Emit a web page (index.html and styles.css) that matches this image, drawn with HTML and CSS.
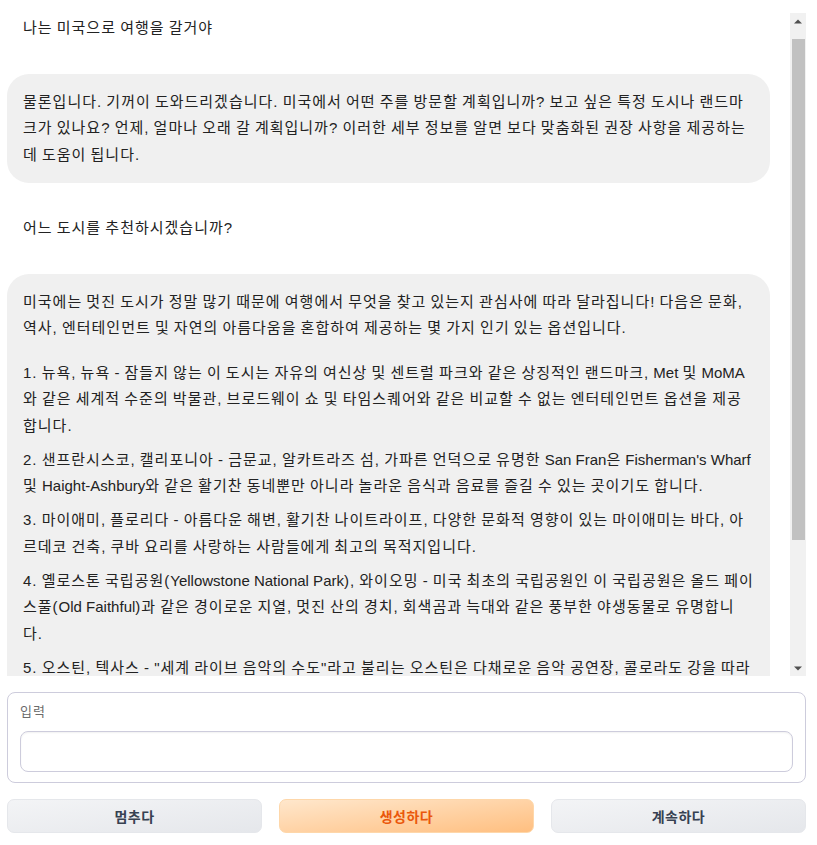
FILE: index.html
```html
<!DOCTYPE html>
<html lang="ko">
<head>
  <meta charset="UTF-8">
  <meta name="viewport" content="width=device-width, initial-scale=1.0">
  <title>Chatbot</title>
  <link rel="stylesheet" href="styles.css">
</head>
<body>
  <div class="app">
    <div class="chat-frame">
      <div class="chat" id="chat">
        <div class="message user">나는 미국으로 여행을 갈거야</div>
        <div class="message bot">
          <p>물론입니다. 기꺼이 도와드리겠습니다. 미국에서 어떤 주를 방문할 계획입니까? 보고 싶은 특정 도시나 랜드마크가 있나요? 언제, 얼마나 오래 갈 계획입니까? 이러한 세부 정보를 알면 보다 맞춤화된 권장 사항을 제공하는 데 도움이 됩니다.</p>
        </div>
        <div class="message user">어느 도시를 추천하시겠습니까?</div>
        <div class="message bot">
          <p class="intro">미국에는 멋진 도시가 정말 많기 때문에 여행에서 무엇을 찾고 있는지 관심사에 따라 달라집니다! 다음은 문화, 역사, 엔터테인먼트 및 자연의 아름다움을 혼합하여 제공하는 몇 가지 인기 있는 옵션입니다.</p>
          <p class="item">1. 뉴욕, 뉴욕 - 잠들지 않는 이 도시는 자유의 여신상 및 센트럴 파크와 같은 상징적인 랜드마크, <span class="en">Met</span> 및 <span class="en">MoMA</span>와 같은 세계적 수준의 박물관, 브로드웨이 쇼 및 타임스퀘어와 같은 비교할 수 없는 엔터테인먼트 옵션을 제공합니다.</p>
          <p class="item">2. 샌프란시스코, 캘리포니아 - 금문교, 알카트라즈 섬, 가파른 언덕으로 유명한 <span class="en">San Fran</span>은 <span class="en">Fisherman's Wharf</span> 및 <span class="en">Haight-Ashbury</span>와 같은 활기찬 동네뿐만 아니라 놀라운 음식과 음료를 즐길 수 있는 곳이기도 합니다.</p>
          <p class="item">3. 마이애미, 플로리다 - 아름다운 해변, 활기찬 나이트라이프, 다양한 문화적 영향이 있는 마이애미는 바다, 아르데코 건축, 쿠바 요리를 사랑하는 사람들에게 최고의 목적지입니다.</p>
          <p class="item">4. 옐로스톤 국립공원(<span class="en">Yellowstone National Park</span>), 와이오밍 - 미국 최초의 국립공원인 이 국립공원은 올드 페이스풀(<span class="en">Old Faithful</span>)과 같은 경이로운 지열, 멋진 산의 경치, 회색곰과 늑대와 같은 풍부한 야생동물로 유명합니다.</p>
          <p class="item">5. 오스틴, 텍사스 - "세계 라이브 음악의 수도"라고 불리는 오스틴은 다채로운 음악 공연장, 콜로라도 강을 따라 늘어선 산책로, 맛있는 텍스멕스 요리로 유명합니다.</p>
          <p class="outro">여행 스타일과 관심사에 맞는 도시를 선택하시고, 더 자세한 정보가 필요하시면 언제든지 말씀해 주세요!</p>
        </div>
      </div>
      <div class="scrollbar">
        <div class="scroll-arrow">
          <svg width="8" height="5" viewBox="0 0 8 5"><polygon points="0,4.5 8,4.5 4,0.5" fill="#505050"/></svg>
        </div>
        <div class="scroll-track">
          <div class="scroll-thumb"></div>
        </div>
        <div class="scroll-arrow">
          <svg width="8" height="5" viewBox="0 0 8 5"><polygon points="0,0.5 8,0.5 4,4.5" fill="#505050"/></svg>
        </div>
      </div>
    </div>

    <div class="input-block">
      <label for="prompt" class="input-label">입력</label>
      <textarea id="prompt" class="input-box" rows="1"></textarea>
    </div>

    <div class="buttons">
      <button type="button" class="btn">멈추다</button>
      <button type="button" class="btn primary">생성하다</button>
      <button type="button" class="btn">계속하다</button>
    </div>
  </div>

  <script>
    document.getElementById('chat').scrollTop = 13;
  </script>
</body>
</html>
```

FILE: styles.css
```css
body {
  margin: 0;
  padding: 0;
  background-color: #fff;
  font-family: 'Liberation Sans', 'Noto Sans CJK KR', sans-serif;
  color: #222;
}

.app {
  padding: 13px 11px 11px 7px;
  display: flex;
  flex-direction: column;
  gap: 16px;
}

.chat-frame {
  height: 663px;
  display: flex;
}

.chat {
  flex: 1;
  overflow-y: hidden;
  display: flex;
  flex-direction: column;
  gap: 17px;
  padding-bottom: 36px;
  box-sizing: border-box;
}

/* hangul glyphs are a bit narrow here, widen them and keep spaces/latin as is */
.message {
  font-size: 15px;
  line-height: 26.5px;
  letter-spacing: 1px;
  word-spacing: -1px;
  padding: 15px 16px;
  margin-right: 20px;
  flex-shrink: 0;
}

.message .en {
  letter-spacing: 0;
  word-spacing: 0;
}

.message p {
  margin: 0;
}

.bot {
  background-color: #f0f0f0;
  border-radius: 22px;
}

.bot .intro {
  margin-bottom: 18px;
}

.bot .item {
  margin-bottom: 7.5px;
}

.bot .outro {
  margin-top: 12px;
}

/* fake scrollbar, headless hides the real one */
.scrollbar {
  width: 16px;
  background-color: #f1f1f1;
  display: flex;
  flex-direction: column;
}

.scroll-arrow {
  height: 16px;
  display: flex;
  align-items: center;
  justify-content: center;
}

.scroll-track {
  flex: 1;
  padding: 10px 1px 0 2px;
}

.scroll-thumb {
  height: 501px;
  background-color: #c1c1c1;
}

.input-block {
  border: 1px solid #cdccdc;
  border-radius: 8px;
  padding: 9px 12px 10px;
  display: flex;
  flex-direction: column;
}

.input-label {
  font-size: 13px;
  letter-spacing: 1px;
  color: #6b6b6b;
  line-height: 20px;
  margin-bottom: 9px;
}

.input-box {
  height: 41px;
  border: 1px solid #cdccdc;
  border-radius: 8px;
  box-shadow: inset 0 1px 2px rgba(0, 0, 0, 0.06);
  resize: none;
  box-sizing: border-box;
  font-family: inherit;
  font-size: 15px;
  padding: 8px 12px;
  outline: none;
}

.buttons {
  display: grid;
  grid-template-columns: 1fr 1fr 1fr;
  gap: 17px;
}

.btn {
  height: 34px;
  border: 1px solid #e5e7eb;
  border-radius: 7px;
  background: linear-gradient(to bottom right, #f3f4f6, #e5e7eb);
  font-family: inherit;
  font-size: 14px;
  font-weight: 600;
  letter-spacing: 0.5px;
  color: #374151;
  cursor: pointer;
}

.btn.primary {
  border-color: #fed7aa;
  background: linear-gradient(to bottom right, #ffe7cc, #ffbf80);
  color: #ea580c;
}
```
